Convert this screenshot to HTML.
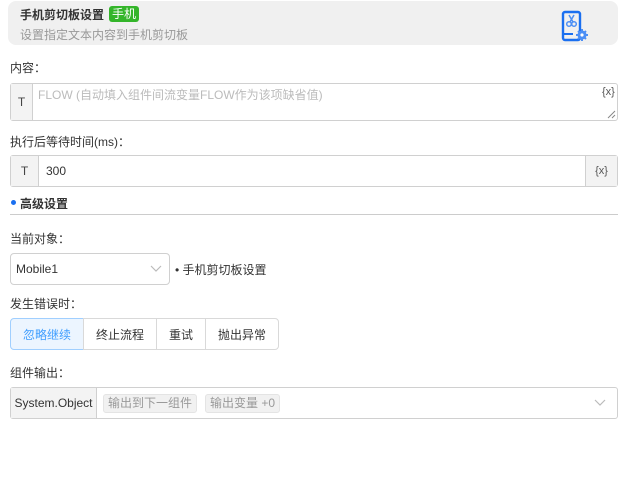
<!DOCTYPE html><html><head><meta charset="utf-8"><style>
*{box-sizing:border-box;margin:0;padding:0}
body{width:630px;height:495px;background:#fff;font-family:"Liberation Sans","Noto Sans CJK SC",sans-serif;font-size:12px;color:#333;position:relative;overflow:hidden}
.a{position:absolute}
.hdr{left:8px;top:1px;width:610px;height:44px;background:#f0f0f0;border-radius:8px}
.lbl{left:10px;font-size:12px;color:#333}
.box{border:1px solid #d0d0d0;border-radius:3px;background:#fff}
.pre{background:#f3f3f3;border-right:1px solid #d0d0d0;display:flex;align-items:center;justify-content:center;color:#444}
.btn{top:318px;height:32px;border:1px solid #d9d9d9;display:flex;align-items:center;justify-content:center;font-size:12px;color:#333;background:#fff}
.tag{top:394px;height:19px;background:#f1f1f1;border:1px solid #e4e4e4;border-radius:3px;color:#999;font-size:12px;line-height:17px;padding:0 4px}
</style></head><body>
<div class="a hdr"></div>
<div class="a" style="left:20px;top:6px;font-weight:bold;font-size:12px;color:#333">手机剪切板设置</div>
<div class="a" style="left:109px;top:6px;height:16px;padding:0 3px;background:#34b52a;color:#fff;border-radius:3px;font-size:12px;line-height:16px">手机</div>
<div class="a" style="left:20px;top:26px;color:#999;font-size:12px">设置指定文本内容到手机剪切板</div>
<svg class="a" style="left:560px;top:9px" width="30" height="34" viewBox="0 0 30 34"><rect x="3" y="3" width="17" height="28" rx="2" fill="none" stroke="#1a6ff0" stroke-width="2.4"/><line x1="3" y1="25" x2="13" y2="25" stroke="#1a6ff0" stroke-width="2"/><circle cx="9" cy="15" r="2.3" fill="none" stroke="#4c8ff5" stroke-width="1.5"/><circle cx="14" cy="15" r="2.3" fill="none" stroke="#4c8ff5" stroke-width="1.5"/><path d="M9 6l4 7M14 6l-4 7" stroke="#4c8ff5" stroke-width="1.5"/><circle cx="22" cy="26" r="4.5" fill="#4c8ff5"/><circle cx="22" cy="26" r="1.6" fill="#fff"/><path d="M22 20v2M22 30v2M16 26h2M26 26h2M18 22l1.5 1.5M24.5 28.5L26 30M18 30l1.5-1.5M24.5 23.5L26 22" stroke="#4c8ff5" stroke-width="2"/></svg>
<div class="a lbl" style="top:59px">内容：</div>
<div class="a box" style="left:10px;top:83px;width:608px;height:38px"></div>
<div class="a pre" style="left:11px;top:84px;width:22px;height:36px">T</div>
<div class="a" style="left:38px;top:86px;color:#bbb">FLOW (自动填入组件间流变量FLOW作为该项缺省值)</div>
<div class="a" style="left:602px;top:86px;color:#555;font-size:11px">{x}</div>
<svg class="a" style="left:607px;top:110px" width="9" height="9"><path d="M1 8L8 1M5 8L8 5" stroke="#888" stroke-width="1"/></svg>
<div class="a lbl" style="top:133px">执行后等待时间(ms)：</div>
<div class="a box" style="left:10px;top:155px;width:608px;height:32px"></div>
<div class="a pre" style="left:11px;top:156px;width:28px;height:30px">T</div>
<div class="a pre" style="left:585px;top:156px;width:32px;height:30px;border-right:none;border-left:1px solid #d0d0d0;font-size:11px;color:#555">{x}</div>
<div class="a" style="left:46px;top:164px;color:#333">300</div>
<div class="a" style="left:11px;top:200px;width:5px;height:5px;border-radius:50%;background:#1a6ff0"></div>
<div class="a" style="left:20px;top:195px;font-weight:bold">高级设置</div>
<div class="a" style="left:10px;top:214px;width:608px;height:1px;background:#ccc"></div>
<div class="a lbl" style="top:230px">当前对象：</div>
<div class="a box" style="left:10px;top:253px;width:160px;height:32px;border-radius:4px"></div>
<div class="a" style="left:16px;top:262px;color:#333">Mobile1</div>
<svg class="a" style="left:150px;top:265px" width="12" height="8"><path d="M1 1l5 5 5-5" fill="none" stroke="#bbb" stroke-width="1.2"/></svg>
<div class="a" style="left:175px;top:261px;color:#333">• 手机剪切板设置</div>
<div class="a lbl" style="top:295px">发生错误时：</div>
<div class="a btn" style="left:10px;width:74px;background:#ecf5ff;border-color:#a0cfff;color:#409eff;border-radius:4px 0 0 4px">忽略继续</div>
<div class="a btn" style="left:83px;width:74px">终止流程</div>
<div class="a btn" style="left:156px;width:50px">重试</div>
<div class="a btn" style="left:205px;width:74px;border-radius:0 4px 4px 0">抛出异常</div>
<div class="a lbl" style="top:364px">组件输出：</div>
<div class="a box" style="left:10px;top:387px;width:608px;height:32px"></div>
<div class="a pre" style="left:11px;top:388px;width:86px;height:30px;color:#333">System.Object</div>
<div class="a tag" style="left:103px">输出到下一组件</div>
<div class="a tag" style="left:205px">输出变量 +0</div>
<svg class="a" style="left:594px;top:399px" width="12" height="8"><path d="M1 1l5 5 5-5" fill="none" stroke="#bbb" stroke-width="1.2"/></svg>
</body></html>
